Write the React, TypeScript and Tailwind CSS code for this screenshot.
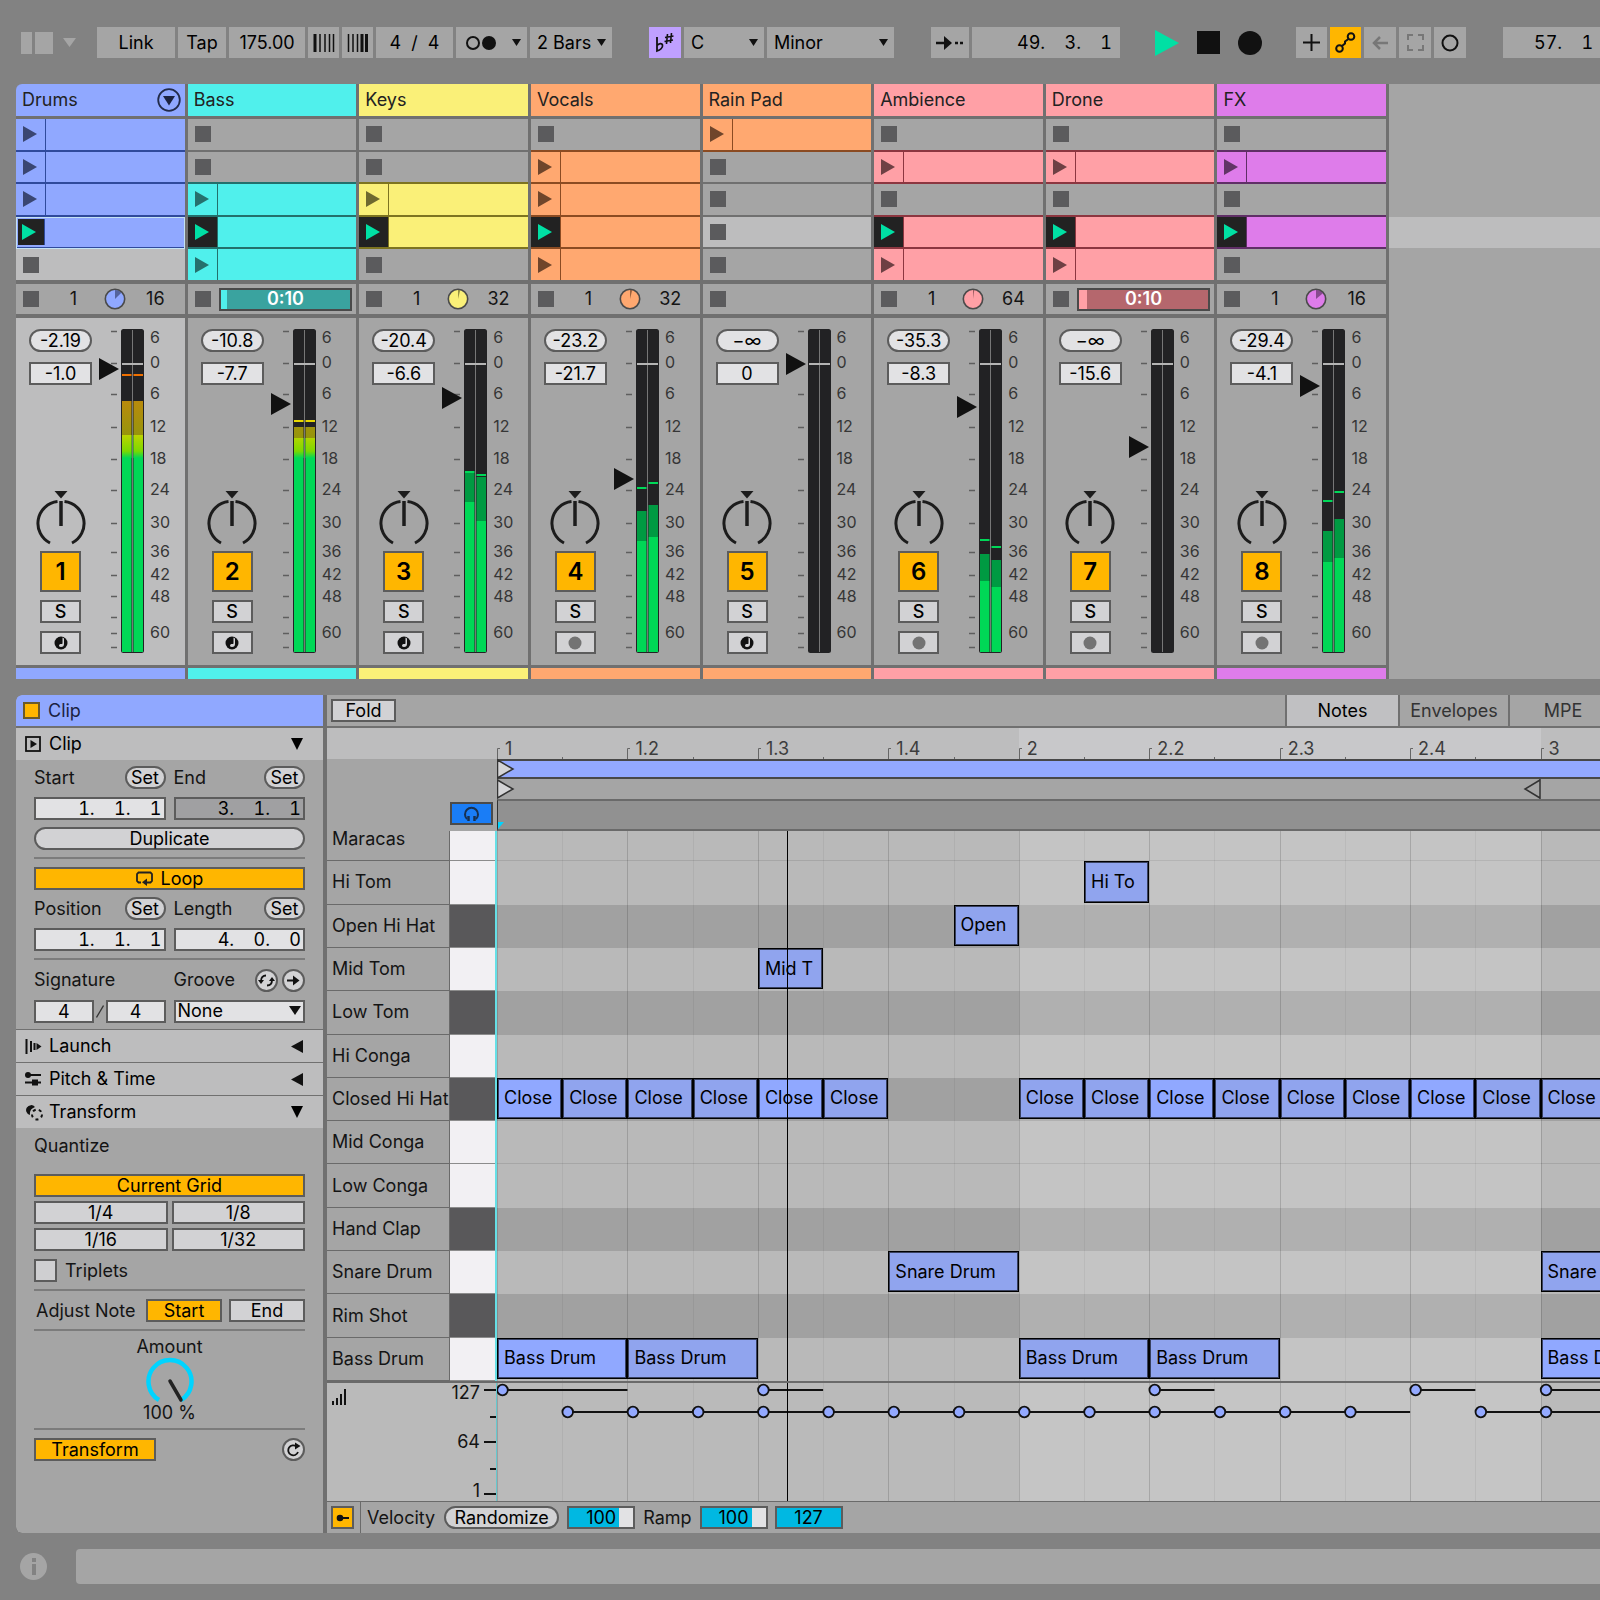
import React from 'react';

type Slot = 'clip' | 'stop' | 'live';

type Bar = { peak: number; hold: number; level: number };

type Track = {
   name: string;
   bg: string;
   fill: string;
   ink: string;
   line: string;
   slots: Slot[];
   loop?: string;
   wedge?: number;
   timer?: string;
   peakDb: string;
   volume: string;
   fader: number;
   hot?: boolean;
   bars?: Bar[];
   midi: boolean;
};

const tracks: Track[] = [
   {
      name: 'Drums', bg: 'bg-[#90a8ff]', fill: '#90a8ff', ink: '#3a4672', line: 'border-[#2f4a9c]',
      slots: ['clip', 'clip', 'clip', 'live', 'stop'], loop: '16', wedge: 45,
      peakDb: '-2.19', volume: '-1.0', fader: 51, hot: true, midi: true,
      bars: [{ peak: 56, hold: 83, level: 117 }, { peak: 56, hold: 83, level: 117 }],
   },
   {
      name: 'Bass', bg: 'bg-[#50f0ec]', fill: '#50f0ec', ink: '#26706d', line: 'border-[#23706c]',
      slots: ['stop', 'stop', 'clip', 'live', 'clip'], timer: 'bg-[linear-gradient(90deg,#50f0ec_5%,#3aa39f_5%)]',
      peakDb: '-10.8', volume: '-7.7', fader: 86, hot: true, midi: true,
      bars: [{ peak: 102, hold: 109, level: 120 }, { peak: 102, hold: 109, level: 120 }],
   },
   {
      name: 'Keys', bg: 'bg-[#faf078]', fill: '#faf078', ink: '#6e692f', line: 'border-[#7d7420]',
      slots: ['stop', 'stop', 'clip', 'live', 'stop'], loop: '32', wedge: 14,
      peakDb: '-20.4', volume: '-6.6', fader: 80, midi: true,
      bars: [{ peak: 153, hold: 155, level: 184 }, { peak: 156, hold: 159, level: 203 }],
   },
   {
      name: 'Vocals', bg: 'bg-[#ffa870]', fill: '#ffa870', ink: '#6f452b', line: 'border-[#8b4b22]',
      slots: ['stop', 'clip', 'clip', 'live', 'clip'], loop: '32', wedge: 14,
      peakDb: '-23.2', volume: '-21.7', fader: 161, midi: false,
      bars: [{ peak: 169, hold: 193, level: 223 }, { peak: 164, hold: 187, level: 219 }],
   },
   {
      name: 'Rain Pad', bg: 'bg-[#ffa870]', fill: '#ffa870', ink: '#6f452b', line: 'border-[#8b4b22]',
      slots: ['clip', 'stop', 'stop', 'stop', 'stop'],
      peakDb: '−∞', volume: '0', fader: 46, midi: true,
   },
   {
      name: 'Ambience', bg: 'bg-[#ffa0a6]', fill: '#ffa0a6', ink: '#6e4044', line: 'border-[#8c3640]',
      slots: ['stop', 'clip', 'stop', 'live', 'clip'], loop: '64', wedge: 8,
      peakDb: '-35.3', volume: '-8.3', fader: 89, midi: false,
      bars: [{ peak: 221, hold: 236, level: 263 }, { peak: 228, hold: 242, level: 269 }],
   },
   {
      name: 'Drone', bg: 'bg-[#ffa0a6]', fill: '#ffa0a6', ink: '#6e4044', line: 'border-[#8c3640]',
      slots: ['stop', 'clip', 'stop', 'live', 'clip'], timer: 'bg-[linear-gradient(90deg,#ffa0a6_6%,#b5676d_6%)]',
      peakDb: '−∞', volume: '-15.6', fader: 129, midi: false,
   },
   {
      name: 'FX', bg: 'bg-[#de7cea]', fill: '#de7cea', ink: '#613566', line: 'border-[#5f2f66]',
      slots: ['stop', 'clip', 'stop', 'live', 'stop'], loop: '16', wedge: 50,
      peakDb: '-29.4', volume: '-4.1', fader: 68, midi: false,
      bars: [{ peak: 182, hold: 213, level: 244 }, { peak: 173, hold: 201, level: 240 }],
   },
];

const ticks = [13, 45, 76, 109, 141, 172, 205, 234, 257, 278, 299, 315, 329];

// label and the distance in pixels to the next one
const scale: [string, number][] = [
   ['6', 25], ['0', 31], ['6', 33], ['12', 32], ['18', 31], ['24', 33],
   ['30', 29], ['36', 23], ['42', 22], ['48', 36], ['60', 20],
];

// start and length count eighths
type Note = { start: number; length: number; label: string; strong?: boolean };

const closed = (start: number): Note => ({
   start, length: 1, label: 'Close', strong: [0, 4, 10, 14].includes(start),
});

const lanes: { name: string; black?: boolean; notes?: Note[] }[] = [
   { name: 'Maracas' },
   { name: 'Hi Tom', notes: [{ start: 9, length: 1, label: 'Hi To' }] },
   { name: 'Open Hi Hat', black: true, notes: [{ start: 7, length: 1, label: 'Open' }] },
   { name: 'Mid Tom', notes: [{ start: 4, length: 1, label: 'Mid T' }] },
   { name: 'Low Tom', black: true },
   { name: 'Hi Conga' },
   { name: 'Closed Hi Hat', black: true, notes: [0, 1, 2, 3, 4, 5, 8, 9, 10, 11, 12, 13, 14, 15, 16].map(closed) },
   { name: 'Mid Conga' },
   { name: 'Low Conga' },
   { name: 'Hand Clap', black: true },
   {
      name: 'Snare Drum',
      notes: [{ start: 6, length: 2, label: 'Snare Drum' }, { start: 16, length: 2, label: 'Snare Drum' }],
   },
   { name: 'Rim Shot', black: true },
   {
      name: 'Bass Drum',
      notes: [
         { start: 0, length: 2, label: 'Bass Drum', strong: true },
         { start: 2, length: 2, label: 'Bass Drum' },
         { start: 8, length: 2, label: 'Bass Drum' },
         { start: 10, length: 2, label: 'Bass Drum' },
         { start: 16, length: 2, label: 'Bass Drum', strong: true },
      ],
   },
];

const beats = ['1', '1.2', '1.3', '1.4', '2', '2.2', '2.3', '2.4', '3'];
const eighth = 1174 / 18;

const box = 'h-[23px] border-2 border-[#5c5c5c] text-black leading-none';
const light = 'bg-[#d2d2d4]';
const field = 'bg-[#e2e2e4]';
const amber = 'bg-[#ffb600]';
const tool = 'h-[31px] shrink-0 bg-[#a5a5a5] flex items-center justify-center text-black leading-none';

const Down = ({ className = '' }: { className?: string }) => (
   <svg className={className} width="12" height="12" viewBox="0 0 12 12">
      <path d="M0 0H12L6 12Z" fill="currentColor" />
   </svg>
);

const ToolSelect = ({ label, value, width }: { label: string; value: string; width: string }) => (
   <div className={`relative h-[31px] shrink-0 ${width}`}>
      <select aria-label={label} className="w-full h-full appearance-none bg-[#a5a5a5] pl-[7px] text-black leading-none">
         <option>{value}</option>
      </select>
      <svg className="absolute right-[6px] top-[12px] pointer-events-none" width="9" height="7" viewBox="0 0 9 7">
         <path d="M0 0H9L4.500 7Z" fill="#111" />
      </svg>
   </div>
);

const Toolbar = () => (
   <header className="flex items-center pt-[27px] pb-[26px] pl-[21px] whitespace-nowrap">
      <button aria-label="Browser" className="flex gap-[3px] shrink-0">
         <span className="w-[11px] h-[22px] bg-[#a5a5a5]" />
         <span className="w-[18px] h-[22px] bg-[#a5a5a5]" />
      </button>
      <button aria-label="Browser menu" className="ml-[10px] mr-[21px] shrink-0 text-[#a5a5a5]">
         <svg width="13" height="9" viewBox="0 0 13 9"><path d="M0 0H13L6.500 9Z" fill="currentColor" /></svg>
      </button>
      <div className="flex gap-[3px] mr-[37px]">
         <button className={`${tool} w-[78px]`}>Link</button>
         <button className={`${tool} w-[48px]`}>Tap</button>
         <input aria-label="Tempo" defaultValue="175.00" className={`${tool} w-[76px] text-center`} />
         <button aria-label="Nudge down" className={`${tool} w-[31px]`}>
            <svg width="22" height="18" viewBox="0 0 22 18">
               <path d="M2 0V18" stroke="#111" strokeWidth="3" />
               <path d="M7 0V18M12 0V18M16.500 0V18M20.500 0V18" stroke="#111" strokeWidth="1.500" />
            </svg>
         </button>
         <button aria-label="Nudge up" className={`${tool} w-[31px]`}>
            <svg width="22" height="18" viewBox="0 0 22 18">
               <path d="M1.500 0V18M6 0V18M10.500 0V18" stroke="#111" strokeWidth="1.500" />
               <path d="M15 0V18M19.500 0V18" stroke="#111" strokeWidth="3" />
            </svg>
         </button>
         <button className={`${tool} w-[77px] gap-[10px]`}>
            <span>4</span><span>/</span><span>4</span>
         </button>
         <button aria-label="Metronome" className={`${tool} w-[71px] gap-[2px] pl-1`}>
            <svg width="30" height="16" viewBox="0 0 30 16">
               <circle cx="7" cy="8" r="6" fill="none" stroke="#111" strokeWidth="2" />
               <circle cx="23" cy="8" r="7" fill="#111" />
            </svg>
            <svg className="ml-[14px]" width="9" height="7" viewBox="0 0 9 7"><path d="M0 0H9L4.500 7Z" fill="#111" /></svg>
         </button>
         <ToolSelect label="Quantization" value="2 Bars" width="w-[82px]" />
      </div>
      <div className="flex gap-[3px] mr-[37px]">
         <button aria-label="Scale mode" className="h-[31px] w-[32px] bg-[#bfa0ff] flex items-center justify-center shrink-0">
            <svg width="20" height="22" viewBox="0 0 20 22" fill="none" stroke="#111">
               <path d="M2 5V19C5 18 8 15.500 7.500 13C7 11 4 11 2 13.500" strokeWidth="1.800" />
               <path d="M12.500 2L11.500 12M16.500 1L15.500 11M10 5.500L18.500 4M9.500 9.500L18 8" strokeWidth="1.600" />
            </svg>
         </button>
         <ToolSelect label="Root note" value="C" width="w-[80px]" />
         <ToolSelect label="Scale" value="Minor" width="w-[127px]" />
      </div>
      <div className="flex gap-[3px] mr-[35px]">
         <button aria-label="Follow" className={`${tool} w-[38px]`}>
            <svg width="28" height="14" viewBox="0 0 28 14">
               <path d="M0 7H10M19 7H22M24 7H27" stroke="#111" strokeWidth="2.500" />
               <path d="M8 0L16 7L8 14Z" fill="#111" />
            </svg>
         </button>
         <input aria-label="Position" defaultValue="49.    3.    1" className={`${tool} w-[148px] pr-2 text-right tabular-nums`} />
      </div>
      <div className="flex items-center gap-[18px] mr-[34px] shrink-0">
         <button aria-label="Play">
            <svg width="24" height="26" viewBox="0 0 24 26"><path d="M0 0L24 13L0 26Z" fill="#00e0a4" /></svg>
         </button>
         <button aria-label="Stop" className="w-[23px] h-[23px] bg-[#111]" />
         <button aria-label="Record" className="w-[24px] h-[24px] rounded-full bg-[#111]" />
      </div>
      <div className="flex gap-[3px] mr-[37px]">
         <button aria-label="Overdub" className={`${tool} w-[31px]`}>
            <svg width="17" height="17" viewBox="0 0 17 17"><path d="M8.500 0V17M0 8.500H17" stroke="#111" strokeWidth="2" /></svg>
         </button>
         <button aria-label="Automation arm" className={`h-[31px] w-[31px] shrink-0 flex items-center justify-center ${amber}`}>
            <svg width="21" height="21" viewBox="0 0 21 21" fill="none" stroke="#111" strokeWidth="2">
               <circle cx="4.500" cy="16.500" r="3.300" />
               <circle cx="16" cy="4.500" r="3.300" />
               <path d="M7 14L10 11.500V9.500L13.500 7" />
            </svg>
         </button>
         <button aria-label="Re-enable automation" className={`${tool} w-[32px]`}>
            <svg width="16" height="14" viewBox="0 0 16 14" fill="none" stroke="#777" strokeWidth="2.500"><path d="M16 7H2M8 1L2 7L8 13" /></svg>
         </button>
         <button aria-label="Capture" className={`${tool} w-[32px]`}>
            <svg width="17" height="17" viewBox="0 0 17 17" fill="none" stroke="#777" strokeWidth="2">
               <path d="M1 6V1H6M11 1H16V6M16 11V16H11M6 16H1V11" />
            </svg>
         </button>
         <button aria-label="Session record" className={`${tool} w-[32px]`}>
            <svg width="18" height="18" viewBox="0 0 18 18"><circle cx="9" cy="9" r="7.500" fill="none" stroke="#111" strokeWidth="2" /></svg>
         </button>
      </div>
      <input aria-label="Loop start" defaultValue="57.    1" className={`${tool} w-[148px] pl-[31px] tabular-nums`} />
   </header>
);

const ClipSlot = ({ track, index }: { track: Track; index: number }) => {
   const kind = track.slots[index];
   const next = track.slots[index + 1];
   const edge = kind !== 'stop' && index < 4 ? track.line : next && next !== 'stop' ? track.line : 'border-[#707070]';
   const selected = track.name === 'Drums' && index === 3;

   if (kind === 'stop') {
      const lit = (track.name === 'Drums' && index === 4) || (track.name === 'Rain Pad' && index === 3);
      return (
         <div className={`flex items-center pl-[7px] border-b-2 ${edge} ${lit ? 'bg-[#bdbdbe]' : 'bg-[#a5a5a5]'}`}>
            <button aria-label={`Stop ${track.name}`} className="w-4 h-4 bg-[#5b5b5d]" />
         </div>
      );
   }
   return (
      <div className={`flex border-b-2 ${edge} ${track.bg} ${selected ? 'outline-1 -outline-offset-1 outline-[#c4e2f4]' : ''}`}>
         <button
            aria-label={`Launch ${track.name} ${index + 1}`}
            className={`border-r ${track.line} ${kind === 'live' ? 'bg-[#222]' : ''} ${selected ? 'm-0.5 w-[27px] pl-1' : 'w-[30px] pl-[7px]'}`}
         >
            <svg width="14" height="16" viewBox="0 0 14 16">
               <path d="M0 0L14 8L0 16Z" fill={kind === 'live' ? '#00e0a4' : track.ink} />
            </svg>
         </button>
      </div>
   );
};

const Pie = ({ fill, ink, angle }: { fill: string; ink: string; angle: number }) => {
   const rad = (angle * Math.PI) / 180;
   return (
      <svg width="22" height="22" viewBox="0 0 22 22">
         <circle cx="11" cy="11" r="9.700" fill={fill} stroke="#4a4a4a" strokeWidth="1.600" />
         <path d={`M11 11V2A9 9 0 0 1 ${11 + 9 * Math.sin(rad)} ${11 - 9 * Math.cos(rad)}Z`} fill={ink} opacity="0.700" />
      </svg>
   );
};

const TrackStatus = ({ track }: { track: Track }) => (
   <div className="h-[30px] mt-[2px] flex items-center pl-[7px] bg-[#a5a5a5] leading-none">
      <button aria-label={`Stop all ${track.name}`} className="w-4 h-4 bg-[#5b5b5d] shrink-0" />
      {track.timer && (
         <div className={`ml-[8px] mr-[4px] flex-1 h-[23px] border-2 border-[#4a4a4a] flex items-center justify-center font-semibold text-white ${track.timer}`}>
            0:10
         </div>
      )}
      {track.loop && (
         <>
            <span className="w-[65px] pl-1 text-center">1</span>
            <Pie fill={track.fill} ink={track.ink} angle={track.wedge ?? 0} />
            <span className="flex-1 text-center">{track.loop}</span>
         </>
      )}
   </div>
);

const Meter = ({ track }: { track: Track }) => (
   <svg className="shrink-0" width="47" height="347" viewBox="0 0 47 347">
      {ticks.map((y) => <path key={y} d={`M12 ${y + 0.5}H18`} stroke="#5e5e5e" strokeWidth="1.500" />)}
      <path d={`M0 ${track.fader - 11}L20 ${track.fader}L0 ${track.fader + 11}Z`} fill="#111" />
      <rect x="22" y="11" width="23" height="324" rx="2.500" fill="#222224" />
      {track.bars?.map((bar, i) => {
         const x = i === 0 ? 23 : 34.500;
         return (
            <g key={i}>
               <rect x={x} y={bar.peak} width="9.500" height="2" fill={track.name === 'Drums' ? '#f07000' : track.hot ? '#e8d800' : '#00d858'} />
               <rect x={x} y={bar.hold} width="9.500" height={bar.level - bar.hold} fill={track.hot ? 'url(#hold)' : '#009a42'} />
               <rect x={x} y={bar.level} width="9.500" height={334 - bar.level} fill="#00d856" />
               {track.hot && <rect x={x} y={bar.level} width="9.500" height={140 - bar.level} fill="url(#warm)" />}
            </g>
         );
      })}
      <path d="M33.500 12V334" stroke="#777" strokeWidth="1" />
      <path d="M23 46H44" stroke="#b4b4b4" strokeWidth="2" />
      <defs>
         <linearGradient id="hold" x1="0" y1="83" x2="0" y2="120" gradientUnits="userSpaceOnUse">
            <stop offset="0" stopColor="#b98a0c" />
            <stop offset="1" stopColor="#94960c" />
         </linearGradient>
         <linearGradient id="warm" x1="0" y1="117" x2="0" y2="140" gradientUnits="userSpaceOnUse">
            <stop offset="0" stopColor="#bcd400" />
            <stop offset="0.700" stopColor="#7cd800" />
            <stop offset="1" stopColor="#00d856" />
         </linearGradient>
      </defs>
   </svg>
);

const PanKnob = () => (
   <svg width="50" height="58" viewBox="0 0 50 58" fill="none" stroke="#1c1c1c" strokeWidth="3">
      <path d="M18.500 1H31.500L25 8.500Z" fill="#1c1c1c" stroke="none" />
      <path d="M21.500 11.500A22 22 0 0 0 14 53M28.500 11.500A22 22 0 0 1 36 53" />
      <path d="M25 11V36" strokeWidth="3.500" />
   </svg>
);

const Channel = ({ track, number }: { track: Track; number: number }) => (
   <div className={`flex h-[347px] ${number === 1 ? 'bg-[#bdbdbe]' : 'bg-[#a5a5a5]'}`}>
      <div className="ml-[13px] w-[63px] mr-[7px] shrink-0 flex flex-col items-center pt-[11px]">
         <button className={`${box} w-full rounded-full bg-[#e2e2e4]`}>{track.peakDb}</button>
         <input aria-label={`${track.name} volume`} defaultValue={track.volume} className={`${box} ${field} w-full mt-[10px] text-center`} />
         <div className="mt-[105px]" aria-label="Pan"><PanKnob /></div>
         <button className={`w-[41px] h-[41px] mt-[3px] border-2 border-[#5c5c5c] text-2xl font-semibold leading-none text-black ${amber}`}>
            {number}
         </button>
         <button className={`${box} ${light} w-[41px] mt-[8px] font-medium`}>S</button>
         <button aria-label="Arm" className={`${box} ${light} w-[41px] mt-[8px] flex items-center justify-center`}>
            {track.midi ? (
               <svg width="14" height="14" viewBox="0 0 14 14">
                  <circle cx="7" cy="7" r="6.500" fill="#111" />
                  <path d="M8.500 1.500V7.500C8 8.500 6.500 7.500 5.500 8.500C4.500 9.500 5 11 7 11C9 11 10 10 10 8V2.500C9.500 2 9 1.700 8.500 1.500Z" fill="#d2d2d4" />
               </svg>
            ) : (
               <svg width="14" height="14" viewBox="0 0 14 14"><circle cx="7" cy="7" r="6.500" fill="#737373" /></svg>
            )}
         </button>
      </div>
      <Meter track={track} />
      <div className="pl-[4px] pt-[9px] text-base leading-5 text-[#363636]">
         {scale.map(([label, gap], i) => <div key={i} style={{ height: gap }}>{label}</div>)}
      </div>
   </div>
);

const Session = () => (
   <section className="ml-4 flex bg-[#a5a5a5] rounded-tl-md overflow-hidden">
      <div className="grid grid-cols-8 w-[1373px] shrink-0 bg-[#707070]">
         {tracks.map((track, i) => (
            <div key={track.name} className="border-r-3 border-[#707070]">
               <div className={`h-8 mb-[3px] flex items-center justify-between pl-[6px] pr-[4px] text-[#222] ${track.bg}`}>
                  {track.name}
                  {i === 0 && (
                     <button aria-label="Unfold group">
                        <svg width="24" height="24" viewBox="0 0 24 24">
                           <circle cx="12" cy="12" r="10.800" fill="none" stroke="#222b4a" strokeWidth="1.800" />
                           <path d="M6 8H18L12 17.500Z" fill="#1c2340" />
                        </svg>
                     </button>
                  )}
               </div>
               <div className="grid grid-rows-5 h-[163px]">
                  {track.slots.map((_, s) => <ClipSlot key={s} track={track} index={s} />)}
               </div>
               <TrackStatus track={track} />
               <div className="h-1" />
               <Channel track={track} number={i + 1} />
               <div className={`h-[11px] mt-[3px] ${track.bg}`} />
            </div>
         ))}
      </div>
      <div className="flex-1 pt-[133px]">
         <div className="h-[31px] bg-[#bdbdbe]" />
      </div>
   </section>
);

const SectionHeader = ({ title, icon, open }: { title: string; icon: React.ReactNode; open?: boolean }) => (
   <button className="w-full h-8 flex items-center pl-[9px] pr-[20px] bg-[#bdbdbe] text-black leading-none">
      <span className="w-[18px] mr-[6px]">{icon}</span>
      <span>{title}</span>
      {open ? <Down className="ml-auto" /> : (
         <svg className="ml-auto" width="12" height="13" viewBox="0 0 12 13"><path d="M12 0V13L0 6.500Z" fill="#111" /></svg>
      )}
   </button>
);

const SetRow = ({ label }: { label: string }) => (
   <div className="flex items-center justify-between h-[23px]">
      <span>{label}</span>
      <button className={`${box} ${light} w-[41px] rounded-full`} aria-label={`Set ${label}`}>Set</button>
   </div>
);

const PositionField = ({ label, value, dim }: { label: string; value: string; dim?: boolean }) => (
   <input
      aria-label={label}
      defaultValue={value}
      className={`${box} ${dim ? 'bg-[#a0a0a2]' : field} w-full min-w-0 pr-[2px] text-right tabular-nums`}
   />
);

const Rule = () => <div className="h-[2px] mb-px bg-[#7c7c7c]" />;

const ClipPanel = () => (
   <aside className="w-[307px] shrink-0 bg-[#a5a5a5] rounded-l-md overflow-hidden">
      <div className="h-[31px] flex items-center gap-2 pl-[7px] bg-[#90a8ff] text-[#1b2242]">
         <span className={`w-[17px] h-[17px] border-2 border-[#6b5a2a] ${amber}`} />
         Clip
      </div>
      <div className="h-[2px] bg-[#707070]" />
      <SectionHeader
         title="Clip"
         open
         icon={
            <svg width="16" height="16" viewBox="0 0 16 16">
               <rect x="1" y="1" width="14" height="14" fill="none" stroke="#111" strokeWidth="1.800" />
               <path d="M5.500 4L12 8L5.500 12Z" fill="#111" />
            </svg>
         }
      />
      <div className="px-[18px] pt-[6px] pb-[6px] flex flex-col gap-[7px]">
         <div className="grid grid-cols-2 gap-x-[8px] gap-y-[8px]">
            <SetRow label="Start" />
            <SetRow label="End" />
            <PositionField label="Start" value="1.    1.    1" />
            <PositionField label="End" value="3.    1.    1" dim />
         </div>
         <button className={`${box} ${light} rounded-full`}>Duplicate</button>
         <Rule />
         <button className={`${box} ${amber} flex items-center justify-center gap-2`}>
            <svg width="17" height="15" viewBox="0 0 17 15" fill="none" stroke="#222" strokeWidth="1.800">
               <path d="M5 11.500H2.500L1 10V3L2.500 1.500H14.500L16 3V10L14.500 11.500H11" />
               <path d="M11 7.500V15L6 11.300Z" fill="#222" stroke="none" />
            </svg>
            Loop
         </button>
         <div className="grid grid-cols-2 gap-x-[8px] gap-y-[8px]">
            <SetRow label="Position" />
            <SetRow label="Length" />
            <PositionField label="Position" value="1.    1.    1" />
            <PositionField label="Length" value="4.    0.    0" />
         </div>
         <Rule />
         <div className="grid grid-cols-2 gap-x-[8px] gap-y-[7px]">
            <span className="h-[23px] leading-[23px]">Signature</span>
            <div className="flex items-center gap-[4px]">
               <span className="mr-auto">Groove</span>
               <button aria-label="Hot-swap groove" className={`${box} ${light} w-[23px] rounded-full flex items-center justify-center`}>
                  <svg width="17" height="15" viewBox="0 0 17 15" fill="none" stroke="#111" strokeWidth="1.800">
                     <path d="M3 8C3 4.500 5 2.500 8 2.500M14 7C14 10.500 12 12.500 9 12.500" />
                     <path d="M0 7H6L3 11ZM11 8H17L14 4Z" fill="#111" stroke="none" />
                  </svg>
               </button>
               <button aria-label="Commit groove" className={`${box} ${light} w-[23px] rounded-full flex items-center justify-center`}>
                  <svg width="13" height="11" viewBox="0 0 13 11">
                     <path d="M0 5.500H8" stroke="#111" strokeWidth="2" />
                     <path d="M6 0.500L12.500 5.500L6 10.500Z" fill="#111" />
                  </svg>
               </button>
            </div>
            <div className="flex items-center gap-[2px]">
               <input aria-label="Numerator" defaultValue="4" className={`${box} ${field} flex-1 min-w-0 text-center`} />
               <svg width="8" height="13" viewBox="0 0 8 13"><path d="M0.500 12.500L7.500 0.500" stroke="#333" strokeWidth="1.300" /></svg>
               <input aria-label="Denominator" defaultValue="4" className={`${box} ${field} flex-1 min-w-0 text-center`} />
            </div>
            <div className="relative">
               <select aria-label="Groove" className={`${box} ${field} w-full appearance-none pl-[2px]`}>
                  <option>None</option>
               </select>
               <svg className="absolute right-[4px] top-[7px] pointer-events-none" width="12" height="9" viewBox="0 0 12 9">
                  <path d="M0 0H12L6 9Z" fill="#111" />
               </svg>
            </div>
         </div>
      </div>
      <div className="bg-[#707070] flex flex-col gap-px pt-px">
         <SectionHeader
            title="Launch"
            icon={
               <svg width="17" height="15" viewBox="0 0 17 15">
                  <path d="M1.500 0V15M6 2V13M9.500 4V11" stroke="#111" strokeWidth="2" />
                  <path d="M11.500 4L16.500 7.500L11.500 11Z" fill="#111" />
               </svg>
            }
         />
         <SectionHeader
            title="Pitch & Time"
            icon={
               <svg width="17" height="14" viewBox="0 0 17 14">
                  <path d="M2 3H16M0 10.500H16" stroke="#111" strokeWidth="1.800" />
                  <circle cx="3" cy="3" r="3" fill="#111" />
                  <rect x="7" y="7.500" width="6" height="6" fill="#111" />
               </svg>
            }
         />
         <SectionHeader
            title="Transform"
            open
            icon={
               <svg width="19" height="17" viewBox="0 0 19 17">
                  <path d="M10 3A5 5 0 1 0 5 11C4.500 7 6 4.500 10 3Z" fill="#111" />
                  <circle cx="12" cy="10.500" r="5" fill="none" stroke="#111" strokeWidth="2" strokeDasharray="3 3.200" />
               </svg>
            }
         />
      </div>
      <div className="px-[18px] pt-[8px] flex flex-col">
         <span className="h-[38px] leading-5">Quantize</span>
         <button className={`${box} ${amber}`}>Current Grid</button>
         <div className="grid grid-cols-2 gap-[4px] mt-[4px]">
            {['1/4', '1/8', '1/16', '1/32'].map((value) => (
               <button key={value} className={`${box} ${light}`}>{value}</button>
            ))}
         </div>
         <label className="flex items-center gap-2 mt-[8px] mb-[7px] h-[23px]">
            <input type="checkbox" className={`${box} w-[23px] appearance-none bg-[#cfcfd1]`} />
            Triplets
         </label>
         <Rule />
         <div className="flex items-center mt-[7px] mb-[7px] h-[23px]">
            <span className="flex-1 pl-[2px] whitespace-nowrap">Adjust Note</span>
            <button className={`${box} ${amber} w-[76px] mr-[7px]`}>Start</button>
            <button className={`${box} ${light} w-[76px]`}>End</button>
         </div>
         <Rule />
         <div className="flex flex-col items-center pt-[5px] pb-[5px] leading-5">
            <span>Amount</span>
            <svg width="50" height="46" viewBox="0 0 50 46" fill="none">
               <path d="M14 43A21.500 21.500 0 1 1 36 43" stroke="#00d4ff" strokeWidth="4.500" />
               <path d="M25 24L36 43" stroke="#222" strokeWidth="3.500" strokeLinecap="round" />
            </svg>
            <span>100 %</span>
         </div>
         <Rule />
         <div className="flex items-center justify-between mt-[7px]">
            <button className={`${box} ${amber} w-[122px]`}>Transform</button>
            <button aria-label="Reset" className={`${box} ${light} w-[23px] rounded-full flex items-center justify-center`}>
               <svg width="14" height="15" viewBox="0 0 14 15" fill="none" stroke="#111" strokeWidth="1.800">
                  <path d="M11 10A5 5 0 1 1 9.500 4.500" />
                  <path d="M8 0.500L13.500 4L8 7.500Z" fill="#111" stroke="none" />
               </svg>
            </button>
         </div>
      </div>
   </aside>
);

const Ruler = () => (
   <div className="flex">
      <div className="w-[170px] shrink-0 flex flex-col">
         <div className="h-[31px] bg-[#bdbdbe]" />
         <div className="flex-1 flex justify-end items-end pr-[4px] pb-[6px]">
            <button aria-label="Preview" className="w-[43px] h-[23px] border-2 border-[#4a4a4a] bg-[#1a7df6] flex items-center justify-center">
               <svg width="17" height="16" viewBox="0 0 17 16" fill="none" stroke="#173050">
                  <path d="M4 13A6.500 6.500 0 1 1 13 13" strokeWidth="2" />
                  <path d="M5.500 10V15M11.500 10V15" strokeWidth="2.500" />
               </svg>
            </button>
         </div>
      </div>
      <div className="flex-1 overflow-hidden">
         <div className="w-[1174px]">
            <div className="relative grid grid-cols-9 h-[31px] bg-[#bdbdbe]">
               {beats.map((beat, i) => (
                  <div key={beat} className={`flex items-end gap-[6px] text-[#3c3c3c] leading-5 ${i > 3 && i < 8 ? 'bg-[#c8c8ca]' : ''}`}>
                     <svg className="-mr-px" width="3" height="11" viewBox="0 0 3 11"><path d="M0.500 11V0.500H3" fill="none" stroke="#666" /></svg>
                     <span>{beat}</span>
                     <span className="ml-auto w-1/2 h-[2px] border-l border-[#666]" />
                  </div>
               ))}
            </div>
            <div className="h-5 border-y-2 border-[#484848] bg-[#93a9ff]">
               <svg className="-mt-[2px]" width="18" height="20" viewBox="0 0 18 20"><path d="M0.500 1L16 10L0.500 19Z" fill="#d4d4d6" stroke="#333" strokeWidth="1.500" /></svg>
            </div>
            <div className="grid grid-cols-9 h-5 bg-[#a5a5a5]">
               <svg width="18" height="20" viewBox="0 0 18 20"><path d="M0.500 1L16 10L0.500 19Z" fill="#d4d4d6" stroke="#333" strokeWidth="1.500" /></svg>
               <svg className="col-start-8 justify-self-end" width="18" height="20" viewBox="0 0 18 20">
                  <path d="M17 0V20M17 1L2 10L17 19" fill="none" stroke="#333" strokeWidth="1.500" />
               </svg>
            </div>
            <div className="h-8 border-y-2 border-l border-b-[#6a6a6a] border-t-[#6a6a6a] border-l-[#333] bg-[#919191] flex items-end">
               <svg width="6" height="7" viewBox="0 0 6 7"><path d="M0 0H6L0 7Z" fill="#00d4ff" /></svg>
            </div>
         </div>
      </div>
   </div>
);

const GridLines = () => (
   <div className="absolute inset-0 grid grid-cols-18 pointer-events-none">
      {Array.from({ length: 18 }, (_, i) => (
         <div
            key={i}
            className={`border-l ${i % 2 ? 'border-black/5' : 'border-black/15'} ${i > 7 && i < 16 ? 'bg-white/16' : ''}`}
         />
      ))}
   </div>
);

const PianoRoll = () => (
   <div className="flex h-[550px] items-end overflow-hidden">
      <div className="w-[123px] shrink-0 h-[563px] grid grid-rows-13 border-r border-[#6a6a6a]">
         {lanes.map((lane) => (
            <div key={lane.name} className="flex items-center pl-[5px] border-b border-[#6a6a6a] whitespace-nowrap text-[#141414]">
               {lane.name}
            </div>
         ))}
      </div>
      <div className="w-[47px] shrink-0 h-[563px] grid grid-rows-13 border-r-2 border-[#66dfe6]">
         {lanes.map((lane) => (
            <button
               key={lane.name}
               aria-label={`Play ${lane.name}`}
               className={`border-b border-[#8c8c8c] ${lane.black ? 'bg-[#59585a]' : 'bg-[#f2f0f3]'}`}
            />
         ))}
      </div>
      <div className="flex-1 overflow-hidden">
         <div className="relative w-[1174px] h-[563px]">
            <div className="absolute inset-0 grid grid-rows-13">
               {lanes.map((lane, i) => (
                  <div
                     key={lane.name}
                     className={`${lane.black ? 'bg-[#a1a1a1]' : 'bg-[#b9b9b9]'} ${!lane.black && lanes[i + 1] && !lanes[i + 1].black ? 'border-b border-[#a6a6a6]' : ''}`}
                  />
               ))}
            </div>
            <GridLines />
            <div className="relative grid grid-rows-13 h-full">
               {lanes.map((lane) => (
                  <div key={lane.name} className="grid grid-cols-18 grid-rows-1 min-h-0">
                     {lane.notes?.map((note) => (
                        <button
                           key={note.start}
                           style={{ gridColumn: `${note.start + 1} / span ${note.length}` }}
                           className={`mb-[2px] border border-black outline-1 -outline-offset-2 outline-black/60 pl-[6px] text-left text-black whitespace-nowrap overflow-hidden ${note.strong ? 'bg-[#90a8ff]' : 'bg-[#90a4ee]'}`}
                        >
                           {note.label}
                        </button>
                     ))}
                  </div>
               ))}
            </div>
            <div className="absolute inset-y-0 left-[290px] w-px bg-black" />
         </div>
      </div>
   </div>
);

const upper: [number, number][] = [[0, 2], [4, 1], [10, 1], [14, 1], [16, 2]];
const lower = [1, 2, 3, 4, 5, 6, 7, 8, 9, 10, 11, 12, 13, 15, 16];

const Velocity = () => (
   <div className="flex h-[118px] bg-[#bababa]">
      <div className="w-[170px] shrink-0 flex justify-between border-r border-[#66c8ce]">
         <svg className="ml-[5px] mt-[6px]" width="15" height="16" viewBox="0 0 15 16">
            <path d="M1 12V16M5 9V16M9 5V16M13 0V16" stroke="#111" strokeWidth="2" />
         </svg>
         <div className="flex">
            <div className="flex flex-col justify-between text-right leading-5 text-[#141414]">
               <span>127</span>
               <span>64</span>
               <span>1</span>
            </div>
            <svg className="ml-[4px]" width="12" height="118" viewBox="0 0 12 118">
               <path d="M0 7H12M6 34H12M0 59H12M6 86H12M0 111H12" stroke="#111" strokeWidth="2" />
            </svg>
         </div>
      </div>
      <div className="flex-1 overflow-hidden">
         <div className="relative w-[1174px] h-full">
            <GridLines />
            <svg className="relative" width="1174" height="118" viewBox="0 0 1174 118" stroke="#111" strokeWidth="1.800">
               {upper.map(([start, length]) => (
                  <path key={start} d={`M${start * eighth + 5} 7H${(start + length) * eighth}`} />
               ))}
               <path d={`M${eighth + 5} 29H${14 * eighth}M${15 * eighth + 5} 29H1174`} />
               {upper.map(([start]) => <circle key={start} cx={start * eighth + 5.500} cy="7" r="5.300" fill="#93a9ff" />)}
               {lower.map((start) => <circle key={start} cx={start * eighth + 5.500} cy="29" r="5.300" fill="#93a9ff" />)}
            </svg>
            <div className="absolute inset-y-0 left-[290px] w-px bg-black" />
         </div>
      </div>
   </div>
);

const slider = 'bg-[linear-gradient(90deg,#00b8e2_78%,#e2e2e4_78%)]';

const VelocityTools = () => (
   <div className="h-[31px] flex items-center bg-[#a5a5a5] pl-[4px] whitespace-nowrap">
      <button aria-label="Velocity lane" className={`${box} ${amber} w-[23px] flex items-center justify-center`}>
         <svg width="14" height="8" viewBox="0 0 14 8"><circle cx="4" cy="4" r="3.300" fill="#111" /><path d="M4 4H13" stroke="#111" strokeWidth="2" /></svg>
      </button>
      <span className="ml-[6px] mr-[6px] w-px h-full bg-[#6a6a6a]" />
      <span>Velocity</span>
      <button className={`${box} ${light} ml-[9px] w-[115px] rounded-full`}>Randomize</button>
      <input aria-label="Randomize amount" defaultValue="100" className={`${box} ${slider} ml-[8px] w-[68px] text-center`} />
      <span className="mx-[8px]">Ramp</span>
      <input aria-label="Ramp start" defaultValue="100" className={`${box} ${slider} w-[68px] text-center`} />
      <input aria-label="Ramp end" defaultValue="127" className={`${box} ml-[7px] w-[68px] text-center bg-[#00b8e2]`} />
   </div>
);

const Editor = () => (
   <main className="flex-1 min-w-0 ml-[4px] bg-[#a5a5a5]">
      <div className="flex h-[31px] items-center pl-[4px]">
         <button className={`${box} ${light} w-[65px]`}>Fold</button>
         <div role="tablist" className="ml-auto flex h-full border-l-2 border-[#707070] text-[#333]">
            <button role="tab" aria-selected="true" className="w-[111px] bg-[#c0c0c2] text-black">Notes</button>
            <button role="tab" aria-selected="false" className="w-[110px] border-l-2 border-[#707070]">Envelopes</button>
            <button role="tab" aria-selected="false" className="w-[92px] pl-4 border-l-2 border-[#707070]">MPE</button>
         </div>
      </div>
      <div className="h-[2px] bg-[#707070]" />
      <Ruler />
      <PianoRoll />
      <div className="h-[2px] bg-[#6a6a6a]" />
      <Velocity />
      <div className="h-px bg-[#6a6a6a]" />
      <VelocityTools />
   </main>
);

const App = () => {
   return (
      <div className="min-h-screen overflow-hidden bg-[#828282] font-[Inter,sans-serif] text-lg leading-6 text-[#141414]">
         <Toolbar />
         <Session />
         <div className="mt-4 ml-4 flex bg-[#707070] rounded-l-md overflow-hidden">
            <ClipPanel />
            <Editor />
         </div>
         <footer className="flex items-center mt-4 pb-4 pl-5">
            <button aria-label="Info" className="w-[27px] h-[27px] rounded-full bg-[#a5a5a5] text-[#828282] flex items-center justify-center">
               <svg width="6" height="17" viewBox="0 0 6 17"><path d="M1 0H5V4H1ZM1 6H5V17H1Z" fill="currentColor" /></svg>
            </button>
            <div className="flex-1 ml-[29px] h-[35px] rounded-l bg-[#a5a5a5]" />
         </footer>
      </div>
   );
};

export default App;
